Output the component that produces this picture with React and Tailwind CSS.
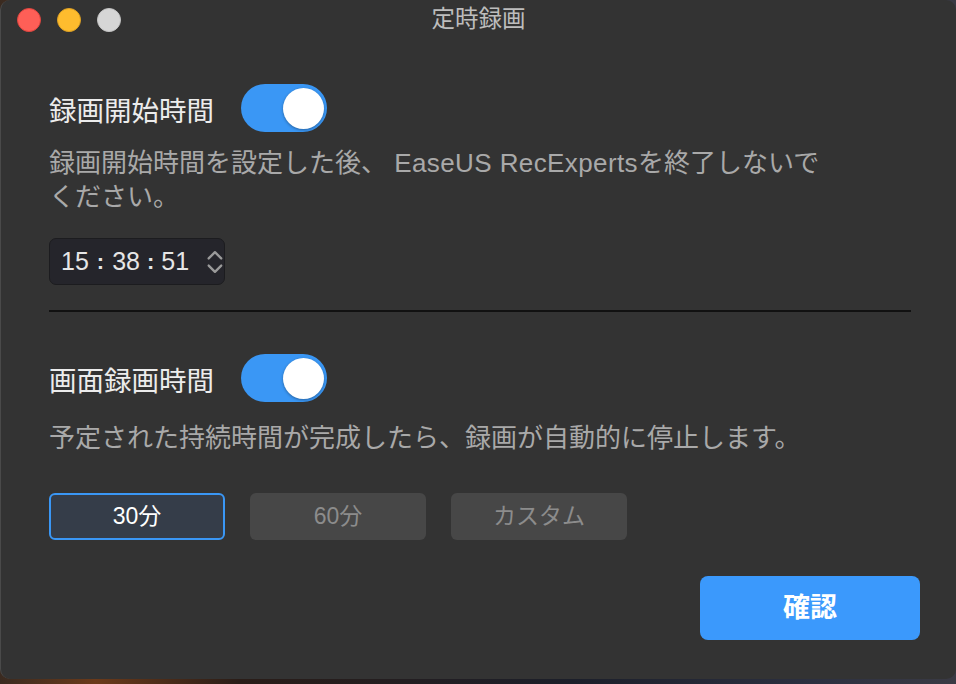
import React, { useState } from 'react';

const FONT = { fontFamily: '"Liberation Sans", "Noto Sans CJK JP", sans-serif' };

const Toggle = ({ on, onClick }) => (
  <button
    onClick={onClick}
    className={`flex h-[48px] w-[86px] items-center rounded-full px-[3px] ${on ? 'justify-end bg-[#3a97f5]' : 'justify-start bg-[#555]'}`}
  >
    <span className="block h-[41px] w-[41px] rounded-full bg-white shadow-[0_1px_3px_rgba(0,0,0,0.35)]" />
  </button>
);

const TimeBox = () => (
  <div className="mt-[24px] flex h-[47px] w-[176px] items-center rounded-[7px] border border-[#1c1c1f] bg-[#25252b] pl-[11px] text-[25px] text-[#e6e6e6]">
    <span>15</span>
    <span className="mx-[8px] text-[22px] font-bold">:</span>
    <span>38</span>
    <span className="mx-[7px] text-[22px] font-bold">:</span>
    <span>51</span>
    <svg className="ml-[17px]" width="20" height="32" viewBox="0 0 20 32" fill="none" stroke="#9a9a9a" strokeWidth="2.6" strokeLinecap="round" strokeLinejoin="round">
      <path d="M3 12 L10 5 L17 12" />
      <path d="M3 20 L10 27 L17 20" />
    </svg>
  </div>
);

export default function App() {
  const [start, setStart] = useState(true);
  const [dur, setDur] = useState(true);
  const [pick, setPick] = useState('30');

  const options = [
    { id: '30', label: '30分' },
    { id: '60', label: '60分' },
    { id: 'custom', label: 'カスタム' },
  ];

  return (
    <div className="h-[684px] w-[956px] overflow-hidden bg-[linear-gradient(90deg,#3a2a20,#6b3a1a_10%,#2a1d18_25%,#1c1f2a_60%,#2c3040_85%,#3a3a44)]" style={FONT}>
      <div className="flex h-[679px] flex-col rounded-[10px] border-l border-[#4a4a4a] bg-[#333333]">
        {/* title bar */}
        <div className="grid h-[40px] grid-cols-[1fr_auto_1fr] items-center">
          <div className="flex items-center gap-[16px] pl-[16px]">
            <span className="h-[24px] w-[24px] rounded-full bg-[#fe5f57] border border-[#e0443e]" />
            <span className="h-[24px] w-[24px] rounded-full bg-[#febc2e] border border-[#dea123]" />
            <span className="h-[24px] w-[24px] rounded-full bg-[#d6d6d6] border border-[#c4c4c4]" />
          </div>
          <div className="text-[23.5px] text-[#bdbdbd]">定時録画</div>
          <div />
        </div>

        <div className="flex flex-1 flex-col pl-[48px] pr-[36px]">
          {/* section 1 */}
          <div className="mt-[44px] flex h-[48px] items-center">
            <div className="w-[192px] pt-[8px] text-[27.5px] leading-[40px] text-[#ececec]">録画開始時間</div>
            <Toggle on={start} onClick={() => setStart(!start)} />
          </div>
          <p className="mt-[14px] text-[26px] leading-[34px] text-[#a9a9a9]">
            録画開始時間を設定した後、 <span className="tracking-[0.4px]">EaseUS RecExperts</span>を終了しないで
            <br />
            ください。
          </p>
          <TimeBox />

          <div className="mr-[9px] mt-[25px] h-[2px] bg-[#111]" />

          {/* section 2 */}
          <div className="mt-[42px] flex h-[48px] items-center">
            <div className="w-[192px] pt-[8px] text-[27.5px] leading-[40px] text-[#ececec]">画面録画時間</div>
            <Toggle on={dur} onClick={() => setDur(!dur)} />
          </div>
          <p className="mt-[19px] text-[26px] leading-[34px] text-[#a9a9a9]">
            予定された持続時間が完成したら、録画が自動的に停止します。
          </p>

          <div className="mt-[38px] flex gap-[25px]">
            {options.map((o) => (
              <button
                key={o.id}
                onClick={() => setPick(o.id)}
                className={`h-[47px] w-[176px] rounded-[6px] text-[23px] ${
                  pick === o.id
                    ? 'border-2 border-[#3a97f5] bg-[#353d49] text-white'
                    : 'bg-[#474747] text-[#8c8c8c]'
                }`}
              >
                {o.label}
              </button>
            ))}
          </div>

          <div className="mt-[36px] flex justify-end">
            <button className="h-[64px] w-[220px] rounded-[8px] bg-[#3b99fc] text-[27px] font-bold text-white">
              確認
            </button>
          </div>
        </div>
      </div>
    </div>
  );
}
